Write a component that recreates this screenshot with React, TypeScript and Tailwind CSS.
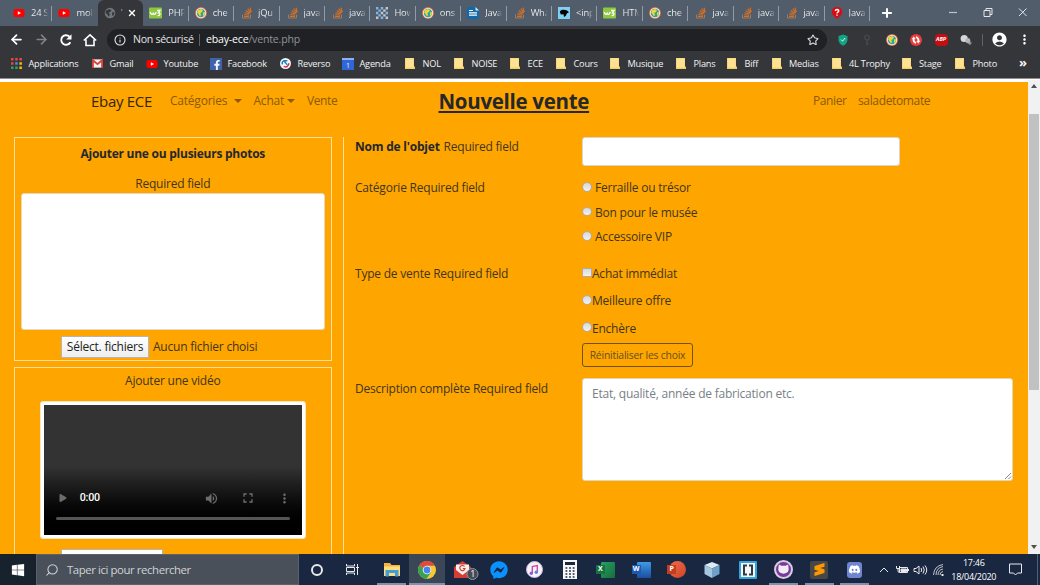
import React from "react";
import { Search, ArrowLeft, ArrowRight, Info, Star, X, Plus } from "lucide-react";
import { FaFacebookF, FaPlay, FaWindows, FaFacebookMessenger } from "react-icons/fa";
import { MdVolumeUp, MdFullscreen, MdMoreVert, MdAccountCircle } from "react-icons/md";
import { SiDiscord, SiSublimetext } from "react-icons/si";

function Youtube() {
  return (
    <svg viewBox="0 0 12 12" className="size-3 shrink-0">
      <rect x="0.500" y="2" width="11" height="8" rx="2" fill="#f00" />
      <path d="M4.800 4.200v3.600L8 6z" fill="#fff" />
    </svg>
  );
}

function Globe() {
  return (
    <svg viewBox="0 0 12 12" className="size-3 shrink-0">
      <circle cx="6" cy="6" r="6" fill="#e5644c" />
      <circle cx="6" cy="6" r="5.200" fill="#f6e9c8" />
      <circle cx="6" cy="6" r="4.200" fill="#25a5a5" />
      <path d="M3 3.200 6 2l2 1-1 2-1.600 1L6 8 5 9.600 3.800 7.500 2.200 5.500zM8 5.500l2-.5-.3 2.500L8 9z" fill="#f0d43a" />
    </svg>
  );
}

function W3() {
  return (
    <svg viewBox="0 0 13 12" className="h-3 w-[13px] shrink-0">
      <rect y="0.500" width="13" height="11" rx="1" fill="#8cc93e" />
      <path d="M1.200 5Q2.800 9.200 4.200 6.200 5.600 9.200 7.200 5M8 3.500h3L9.400 5.800c2.500 0 2 3.200-.8 2.800" fill="none" stroke="#fff" strokeWidth="1.300" />
    </svg>
  );
}

function Stack() {
  return (
    <svg viewBox="-1 0 12 12" className="size-3 shrink-0">
      <path d="M1.500 7.500V11h8V7.500" fill="none" stroke="#a07a60" strokeWidth="1" />
      <path d="M3 9.500h5M3.100 7.700l5 .5M3.600 5.700l4.800 1.300M4.800 3.600l4.200 2.600M6.700 1.700l3.100 3.900M9 .6l1.200 4.600" stroke="#d9701f" strokeWidth="1.150" fill="none" />
    </svg>
  );
}

function Checker() {
  return (
    <svg viewBox="0 0 12 12" className="size-3 shrink-0">
      <path d="M0 0h2.400v2.400H0zM4.800 0h2.400v2.400H4.800zM2.400 2.400h2.400v2.400H2.400zM9.600 4.800H12v2.400H9.600zM0 4.800h2.400v2.400H0zM4.800 9.600h2.400V12H4.800zM2.400 7.200h2.400v2.400H2.400z" fill="#7fb6e6" />
      <path d="M9.600 0H12v2.400H9.600zM7.200 2.400h2.400v2.400H7.200zM4.800 4.800h2.400v2.400H4.800zM7.200 7.200h2.400v2.400H7.200zM0 9.600h2.400V12H0zM9.600 9.600H12V12H9.600z" fill="#c4c8cc" />
    </svg>
  );
}

function Doc() {
  return (
    <svg viewBox="0 0 12 12" className="size-3 shrink-0">
      <path d="M0 0h9l3 3v9H0z" fill="#1368a8" />
      <path d="M8.500 0 12 3.500H8.500z" fill="#dceaf5" />
      <path d="M2 3.500h4M2 5.800h8M2 8.200h8" stroke="#fff" strokeWidth="1.200" />
    </svg>
  );
}

function Bird() {
  return (
    <svg viewBox="0 0 12 12" className="size-3 shrink-0">
      <rect width="12" height="12" fill="#7fd0f3" />
      <path d="M1.800 4.500C3 2 8.500 1.800 11 5.200L8.800 6.500 7.800 8.800 6 10 5.500 7.200 2.800 7.500z" fill="#000" />
    </svg>
  );
}

function Question() {
  return (
    <svg viewBox="0 0 12 12" className="size-3 shrink-0">
      <path d="M6 0a5 5 0 0 1 3.600 8.600L6 12 2.400 8.600A5 5 0 0 1 6 0z" fill="#d90b12" />
      <path d="M4.300 3.900C4.500 1.900 7.900 2 7.700 4 7.500 5 6 5.200 6 6.600M6 7.600v1.200" fill="none" stroke="#fff" strokeWidth="1.400" />
    </svg>
  );
}

function Folder() {
  return (
    <svg viewBox="0 0 10 11" className="h-[11px] w-[10px] shrink-0">
      <path d="M0 0h9v8l1 1v2H0z" fill="#f4cf62" />
      <path d="M.6.4h8v9.200h-8z" fill="#fde293" />
    </svg>
  );
}

function BareGlobe() {
  return (
    <svg viewBox="0 0 12 12" className="size-3 shrink-0">
      <circle cx="6" cy="6" r="5.300" fill="#70757a" />
      <path d="M2 3.500 5 2.200l2.500.8L6.300 5l-2 .5L6 7.300 4.600 9.800 3.300 7.200 1.500 6zM8 5.500l2.500-.5-.7 3L8.300 9z" fill="#35363a" />
    </svg>
  );
}

const tabs: [React.ReactNode, string][] = [
  [<W3 />, "PHP"],
  [<Globe />, "che"],
  [<Stack />, "jQu"],
  [<Stack />, "java"],
  [<Stack />, "java"],
  [<Checker />, "How"],
  [<Globe />, "ons"],
  [<Doc />, "Java"],
  [<Stack />, "Wha"],
  [<Bird />, "<inp"],
  [<W3 />, "HTM"],
  [<Globe />, "che"],
  [<Stack />, "java"],
  [<Stack />, "java"],
  [<Stack />, "java"],
  [<Question />, "Java"],
];

function Tab({ icon, title, line = true }: { icon: React.ReactNode; title: string; line?: boolean }) {
  return (
    <div className="flex h-[26px] w-[45.430px] shrink-0 items-center pl-[6px]">
      {icon}
      <span className="ml-[6px] w-[17px] shrink-0 bg-linear-to-r from-[#f1f3f4] from-70% to-transparent bg-clip-text text-[9.400px] tracking-[-0.2px] whitespace-nowrap text-transparent">{title}</span>
      {line && <span className="ml-auto h-[15px] w-px bg-[#929aa3]" />}
    </div>
  );
}

function TabStrip() {
  return (
    <div className="flex h-[26px] items-center bg-[#515d6a] pl-[7px]">
      <Tab icon={<Youtube />} title="24 S" />
      <Tab icon={<Youtube />} title="mol" line={false} />
      <div className="flex h-[26px] w-[45.430px] shrink-0 items-center rounded-t-[6px] bg-[#35363a] pl-[6px] text-[9px] text-white">
        <BareGlobe />
        <span className="ml-[5px] w-[6px] text-[#8ab4f8]">'</span>
        <X size={10} strokeWidth={3.200} />
      </div>
      {tabs.map(([icon, title], i) => (
        <Tab key={i} icon={icon} title={title} />
      ))}
      <Plus size={14} strokeWidth={3.500} className="ml-[10px] shrink-0 text-white" />
      <svg viewBox="0 0 82 12" className="ml-[53px] h-3 w-[82px] shrink-0" fill="none" stroke="#e4e6e8">
        <path d="M2 5.500h8" stroke="#c0c5ca" strokeWidth="1.200" />
        <path d="M37 3.500h6v6h-6zM39 3.500v-2h6v6h-2M72 1.500l7.500 7.500M79.500 1.500 72 9" />
      </svg>
    </div>
  );
}

function AddressBar() {
  return (
    <div className="flex h-[28px] items-center pb-[1px] pl-[9px] text-white">
      <ArrowLeft size={15} strokeWidth={2.800} />
      <ArrowRight size={15} strokeWidth={2.500} className="ml-[10px] text-[#808387]" />
      <svg viewBox="0 0 16 16" className="ml-[9px] size-4" fill="none" stroke="currentColor" strokeWidth="1.900">
        <path d="M12.300 10.200A4.800 4.800 0 1 1 11.500 4.700" />
        <path d="M13.500 2.200v5.300H8.200z" fill="currentColor" stroke="none" />
      </svg>
      <svg viewBox="0 0 16 16" className="ml-[8px] size-4" fill="none" stroke="currentColor" strokeWidth="1.600">
        <path d="M1.800 8.500 8 2.800l6.200 5.700M4 7.500v6h8v-6" />
      </svg>
      <div className="ml-[9px] flex h-[22px] w-[720px] items-center rounded-full bg-[#202124] pl-[7px] text-[10.600px]">
        <Info size={12} strokeWidth={2.200} className="text-[#e4e6e8]" />
        <span className="ml-[7px] w-[66px] tracking-[-0.3px] whitespace-nowrap text-[#e4e6e8]">Non sécurisé</span>
        <span className="h-3 w-px bg-[#5f6368]" />
        <span className="ml-[6px] tracking-[-0.2px] whitespace-nowrap">ebay-ece<span className="text-[#8f949a]">/vente.php</span></span>
        <Star size={12} strokeWidth={2.200} className="mr-[8px] ml-auto text-[#dadce0]" />
      </div>
      <div className="ml-[10px] flex w-[135px] shrink-0 items-center justify-between">
        <svg viewBox="0 0 12 12" className="size-3"><path d="m6 .5 4.500 1.500v4Q10 10 6 11.700 2 10 1.500 6V2z" fill="#12a483" /><path d="m4 5.500 1.500 1.700L8.200 4" stroke="#d7fff1" fill="none" /></svg>
        <svg viewBox="0 0 12 12" className="size-3"><path d="M6 11.500V6M6 9.500h1.500M6 6a2.300 2.500 0 1 1 .1 0" stroke="#4a4c50" fill="none" strokeWidth="1.200" /></svg>
        <Globe />
        <svg viewBox="0 0 12 12" className="size-3"><circle cx="6" cy="6" r="6" fill="#eb3b3b" /><path d="M6 9Q3.200 8 3.500 4.500M6 3Q8.800 4 8.500 7.500" stroke="#fff" strokeWidth="1.700" fill="none" /><path d="M1.800 5.300 3.700 2.500l2 2.600zM10.200 6.700 8.300 9.500l-2-2.600z" fill="#fff" /></svg>
        <span className="flex h-3 w-[13px] items-center justify-center rounded-[4px] bg-[#c70d0f] text-[5.500px] font-bold italic">ABP</span>
        <svg viewBox="0 0 12 12" className="size-3"><path d="m7 7 4 3" stroke="#8a8c8f" strokeWidth="3" /><circle cx="4.200" cy="4.500" r="3.600" fill="#d5d7d8" /><circle cx="7.800" cy="6.500" r="2.500" fill="#b3b5b7" /></svg>
      </div>
      <span className="ml-[10px] h-3 w-px bg-[#5f6368]" />
      <MdAccountCircle size={17} className="ml-[8px]" />
      <MdMoreVert size={15} className="ml-[9px]" />
    </div>
  );
}

function Bookmark({ icon, label, w }: { icon?: React.ReactNode; label: string; w: string }) {
  return (
    <div className={"flex shrink-0 items-center whitespace-nowrap " + w}>
      <span className="flex w-[17.500px] shrink-0">{icon ?? <Folder />}</span>
      <span>{label}</span>
    </div>
  );
}

function Bookmarks() {
  return (
    <div className="flex h-[24px] items-center pb-[4px] pl-[11px] text-[9.200px] tracking-[-0.2px] text-[#f1f3f4]">
      <Bookmark w="w-[81px]" label="Applications" icon={
        <svg viewBox="0 0 11 11" className="size-[11px]">
          <path d="M0 0h2.500v2.500H0zM0 4.200h2.500v2.500H0zM8.400 0h2.500v2.500H8.400zM4.200 0h2.500v2.500H4.200z" fill="#e8473b" />
          <path d="M4.200 4.200h2.500v2.500H4.200z" fill="#4b8bf5" />
          <path d="M0 8.400h2.500v2.500H0zM4.200 8.400h2.500v2.500H4.200z" fill="#31a354" />
          <path d="M8.400 8.400h2.500v2.500H8.400zM8.400 4.200h2.500v2.500H8.400z" fill="#f7bd16" />
        </svg>} />
      <Bookmark w="w-[54px]" label="Gmail" icon={<svg viewBox="0 0 12 12" className="size-[11px]"><path d="M0 1.500h12v9H0z" fill="#f2f2f2" /><path d="M1 11V2.500l5 4.200 5-4.200V11" fill="none" stroke="#d93f35" strokeWidth="2" /></svg>} />
      <Bookmark w="w-[64px]" label="Youtube" icon={<Youtube />} />
      <Bookmark w="w-[70px]" label="Facebook" icon={<span className="flex size-3 items-end justify-end bg-[#3f62ad]"><FaFacebookF size={10} /></span>} />
      <Bookmark w="w-[62px]" label="Reverso" icon={<svg viewBox="0 0 12 12" className="size-[11px]"><circle cx="6" cy="6" r="6" fill="#f2f5f7" /><path d="M2.800 7A3 3 0 0 1 4 3h4M4.500 3.500l3.500 4" stroke="#1581c4" strokeWidth="1.500" fill="none" /><path d="M9.500 5.500A3.500 3.500 0 0 1 4 9" stroke="#db2b3f" strokeWidth="1.500" fill="none" /></svg>} />
      <Bookmark w="w-[63px]" label="Agenda" icon={<span className="flex size-3 flex-col items-center justify-end border-t-2 border-[#8bb1f5] bg-[#2f66d8] text-[7px] leading-[9px]">1</span>} />
      <Bookmark w="w-[49px]" label="NOL" />
      <Bookmark w="w-[56px]" label="NOISE" />
      <Bookmark w="w-[46px]" label="ECE" />
      <Bookmark w="w-[54px]" label="Cours" />
      <Bookmark w="w-[66px]" label="Musique" />
      <Bookmark w="w-[51px]" label="Plans" />
      <Bookmark w="w-[44.500px]" label="Biff" />
      <Bookmark w="w-[60px]" label="Medias" />
      <Bookmark w="w-[70px]" label="4L Trophy" />
      <Bookmark w="w-[53.500px]" label="Stage" />
      <Bookmark w="w-[64px]" label="Photo" />
      <span className="mb-[3px] text-[13px] leading-none font-bold">»</span>
    </div>
  );
}

function Caret() {
  return <span className="mt-[-1px] h-0 w-0 shrink-0 border-x-[4px] border-t-[4px] border-x-transparent border-t-current" />;
}

function Choice({ label, square = false, wide = false }: { label: string; square?: boolean; wide?: boolean }) {
  return (
    <label className="flex items-center">
      <span className={"mb-[2px] size-[9.500px] border border-[#b3ab9c] bg-linear-to-b from-[#d8d8d8] to-[#f2f2f2] " + (square ? "rounded-[1px]" : "rounded-full")} />
      <span className={wide ? "ml-[3.500px]" : "ml-[0.500px]"}>{label}</span>
    </label>
  );
}

function LeftColumn() {
  return (
    <div className="ml-[14px] flex w-[317.500px] shrink-0 flex-col gap-[6px]">
      <section className="flex h-[224px] shrink-0 flex-col items-center border border-[#ffdf9f]">
        <h2 className="mt-[7px] h-[18px] leading-[18px] font-bold tracking-[-0.250px] text-[#24282c]">Ajouter une ou plusieurs photos</h2>
        <p className="mt-[12px] h-[18px] leading-[18px]">Required field</p>
        <div className="h-[137px] w-[304px] shrink-0 rounded-[3px] border border-[#e5d9bd] bg-white" />
        <div className="mt-[6px] ml-[46px] flex items-center self-start">
          <button className="h-[22px] w-[88px] border border-[#b9b5aa] bg-linear-to-b from-white to-[#eeeeee] whitespace-nowrap text-[#222]">Sélect. fichiers</button>
          <span className="ml-[4px]">Aucun fichier choisi</span>
        </div>
      </section>
      <section className="flex h-[200px] shrink-0 flex-col items-center border border-[#ffdf9f]">
        <p className="mt-[4px] h-[18px] shrink-0 leading-[18px]">Ajouter une vidéo</p>
        <div className="mt-[11px] h-[138px] w-[266px] shrink-0 rounded-[3px] border border-[#f5e6c4] bg-white p-[3px]">
          <div className="flex h-full flex-col justify-end bg-linear-to-b from-[#333333] from-47% to-black">
            <div className="flex items-center text-[#6d6d6d]">
              <FaPlay size={8} className="ml-[15px]" />
              <span className="ml-[13px] w-[121px] font-[Roboto,sans-serif] text-[10.700px] font-medium text-white">0:00</span>
              <MdVolumeUp size={15} className="ml-[3px]" />
              <MdFullscreen size={16} className="ml-[21px]" />
              <MdMoreVert size={15} className="ml-[21px]" />
            </div>
            <div className="mx-[12px] mt-[10.500px] mb-[15px] h-[3px] rounded-full bg-[#545454]" />
          </div>
        </div>
        <div className="mt-[9.500px] ml-[46px] h-[22px] w-[102px] shrink-0 self-start border border-[#b9b5aa] bg-white" />
      </section>
    </div>
  );
}

function SaleForm() {
  return (
    <div className="ml-[11.500px] grid flex-1 grid-cols-[227px_1fr] content-start border-l border-[#ffdf9f] pl-[11px]">
      <div className="h-[40px] leading-[20px]"><b className="mr-[1px] text-[#24282c]">Nom de l'objet</b> Required field</div>
      <div><div className="h-[29px] w-[318px] rounded-[3px] border border-[#dcd6c6] bg-white" /></div>
      <div className="h-[86px] leading-[22px]">Catégorie Required field</div>
      <div className="flex flex-col gap-[2.500px] leading-[22px]">
        <Choice wide label="Ferraille ou trésor" />
        <Choice wide label="Bon pour le musée" />
        <Choice wide label="Accessoire VIP" />
      </div>
      <div className="h-[115px] leading-[21px]">Type de vente Required field</div>
      <div className="flex flex-col items-start gap-[6.300px] leading-[21px]">
        <Choice square label="Achat immédiat" />
        <Choice label="Meilleure offre" />
        <Choice label="Enchère" />
        <button className="-mt-[2px] h-[24px] w-[111px] rounded-[3px] border border-[#6d521b] text-[10.400px] leading-[20px] whitespace-nowrap text-[#65501f]">Réinitialiser les choix</button>
      </div>
      <div className="leading-[21px]">Description complète Required field</div>
      <div className="flex h-[103px] w-[431px] items-start justify-between rounded-[3px] border border-[#e3d6b6] bg-white pl-[9px] leading-[18px] text-[#777f87]">
        <span className="mt-[6px]">Etat, qualité, année de fabrication etc.</span>
        <svg viewBox="0 0 8 8" className="size-2 self-end" stroke="#777" strokeWidth="0.900"><path d="M1 7 7 1M4.500 7 7 4.500" /></svg>
      </div>
    </div>
  );
}

function Page() {
  return (
    <div className="flex h-[476px] border-t border-[#8d8d92] bg-white pt-px text-[#40361c]">
      <main className="mt-[2px] flex w-[1028px] flex-col overflow-hidden bg-[#ffa500] text-[12px] tracking-[-0.220px]">
        <nav className="flex h-[55px] shrink-0 items-center pb-[17px] whitespace-nowrap text-[#8a5a05]">
          <span className="ml-[91px] w-[79px] text-[15px] tracking-[-0.300px] text-[#33260c]">Ebay ECE</span>
          <span className="w-[63.500px]">Catégories</span><Caret />
          <span className="ml-[12px] w-[33.500px]">Achat</span><Caret />
          <span className="ml-[12px] w-[131.500px] tracking-[-0.400px]">Vente</span>
          <h1 className="mt-px w-[374.500px] text-[20.500px] font-bold tracking-[-0.300px] text-[#24282c] underline decoration-2 underline-offset-2">Nouvelle vente</h1>
          <span className="w-[45px] tracking-[-0.400px]">Panier</span>
          <span className="tracking-[-0.350px]">saladetomate</span>
        </nav>
        <div className="flex h-[430px]">
          <LeftColumn />
          <SaleForm />
        </div>
      </main>
      <div className="flex flex-1 flex-col items-center bg-[#f1f1f1]">
        <span className="mt-[4px] h-0 w-0 border-x-[3px] border-b-[4px] border-x-transparent border-b-[#505050]" />
        <span className="mt-[26px] h-[276px] w-[10px] bg-[#c1c1c1]" />
        <span className="mt-auto mb-[5px] h-0 w-0 border-x-[3px] border-t-[4px] border-x-transparent border-t-[#505050]" />
      </div>
    </div>
  );
}

function TaskItem({ children, open = false, active = false }: { children: React.ReactNode; open?: boolean; active?: boolean }) {
  return (
    <div className={"relative flex h-[31px] w-[35.650px] shrink-0 items-center justify-center " + (active ? "bg-[#3b4756]" : "")}>
      {children}
      {(open || active) && <span className={"absolute bottom-0 h-[2px] bg-[#7d93ad] " + (active ? "w-full" : "w-[29px]")} />}
    </div>
  );
}

function Office({ letter, dark, light, round = false }: { letter: string; dark: string; light: string; round?: boolean }) {
  return (
    <span className="relative flex h-[17px] w-[19px] items-center">
      <span className={"absolute right-0 " + light + (round ? " size-[17px] rounded-full" : " h-4 w-[14px] rounded-[1px]")} />
      <span className={"relative flex size-[9px] items-center justify-center text-[7px] font-bold text-white " + dark}>{letter}</span>
    </span>
  );
}

function Taskbar() {
  return (
    <footer className="flex h-[31px] items-center bg-[#1a2740] text-white">
      <div className="flex h-full w-[36px] shrink-0 items-center justify-center bg-[#18222d]"><FaWindows size={14} /></div>
      <div className="flex h-full w-[263px] shrink-0 items-center border border-[#59616a] bg-[#495059] pl-[8px] text-[11.400px] tracking-[-0.420px] text-[#d0d3d6]">
        <Search size={14} strokeWidth={1.800} className="-scale-x-100" />
        <span className="ml-[8px]">Taper ici pour rechercher</span>
      </div>
      <TaskItem><span className="size-[12px] rounded-full border-2 border-[#e8e9ec]" /></TaskItem>
      <TaskItem>
        <svg viewBox="0 0 13 13" className="size-[13px]" fill="none" stroke="#e8e9ec"><path d="M.5 1v2h8V1M.5 4.500h8v4h-8zM.5 12v-2h8v2M11.500 1v11M10 4.500h3" /></svg>
      </TaskItem>
      <span className="w-[3.500px] shrink-0" />
      <TaskItem open>
        <svg viewBox="0 0 18 16" className="h-4 w-[18px]"><path d="M1 1h6l1.500 2H17v11H1z" fill="#f3b63f" /><path d="M1 4.500h16V14H1z" fill="#ffdc7c" /><path d="M2.500 8h13v6.500H12V11H6v3.500H2.500z" fill="#3f9edb" /></svg>
      </TaskItem>
      <TaskItem active>
        <svg viewBox="0 0 18 18" className="size-[18px]"><circle cx="9" cy="9" r="9" fill="#f9c934" /><path d="M9 9 1.200 4.500A9 9 0 0 1 16.800 4.700H9z" fill="#de4b3c" /><path d="M9 9 1.200 4.500A9 9 0 0 0 8.400 18L13 11.300z" fill="#38a156" /><circle cx="9" cy="9" r="4.300" fill="#f6f6f6" /><circle cx="9" cy="9" r="3.400" fill="#4585ed" /></svg>
      </TaskItem>
      <TaskItem>
        <svg viewBox="0 0 26 20" className="ml-[7px] h-5 w-[26px] shrink-0"><path d="M1 7 9.500 1 18 7v11H1z" fill="#d53d32" /><path d="M3 4.500h13v5.500l-6.500 5L3 10z" fill="#f4f0ee" /><path d="M11.500 6.500a2.600 2.600 0 1 0 .5 2H9.800" fill="none" stroke="#d53d32" strokeWidth="1.200" /><circle cx="19.500" cy="14" r="5.500" fill="#454b55" stroke="#8d949d" /><text x="17.200" y="17.200" fontSize="9" fill="#fff">1</text></svg>
      </TaskItem>
      <TaskItem><FaFacebookMessenger size={18} className="text-[#0a91ff]" /></TaskItem>
      <TaskItem><span className="flex size-[17px] items-center justify-center rounded-full border border-[#d0b9dc] bg-[#f6f4f8]"><svg viewBox="0 0 12 12" className="size-3"><path d="M4.300 9V2.500l5-1V8" fill="none" stroke="#d64a9c" strokeWidth="1.400" /><circle cx="3.300" cy="9.200" r="1.700" fill="#8b5be0" /><circle cx="8.300" cy="8.200" r="1.700" fill="#5b83e8" /></svg></span></TaskItem>
      <TaskItem>
        <svg viewBox="0 0 14 19" className="h-[19px] w-[14px]"><path d="M0 0h14v19H0z" fill="#f7f7f7" /><path d="M2 2h10v3H2z" fill="#1a2740" /><path d="M2.500 8h10M2.500 11h10M2.500 14h10M2.500 17h10" stroke="#1a2740" strokeWidth="1.500" strokeDasharray="1.800 1.800" /></svg>
      </TaskItem>
      <TaskItem><Office letter="X" dark="bg-[#17723f]" light="bg-linear-to-br from-[#25a366] to-[#186c3c]" /></TaskItem>
      <TaskItem><Office letter="W" dark="bg-[#1b58b5]" light="bg-linear-to-b from-[#3f9be8] to-[#1e4d9f]" /></TaskItem>
      <TaskItem><Office round letter="P" dark="bg-[#c33e1f]" light="bg-linear-to-br from-[#ef6b49] to-[#cf4525]" /></TaskItem>
      <TaskItem>
        <svg viewBox="0 0 16 18" className="h-[18px] w-4"><path d="M8 1 15.500 4 8 7.500.5 4z" fill="#dcecf5" /><path d="M.5 4 8 7.500V17L.5 13z" fill="#a5c6df" /><path d="M15.500 4 8 7.500V17l7.500-4z" fill="#6fa0c8" /></svg>
      </TaskItem>
      <TaskItem>
        <svg viewBox="0 0 18 18" className="size-[18px]"><rect width="18" height="18" rx="1" fill="#31a5df" /><rect x="2" y="2" width="14" height="14" fill="#f4f6f7" /><path d="M8 4.500H5v9h3M10 4.500h3v9h-3" fill="none" stroke="#303a42" strokeWidth="2" /></svg>
      </TaskItem>
      <TaskItem open><span className="flex size-[19px] items-center justify-center rounded-full border-2 border-[#d9cbe3] bg-[#7a3a9c]"><svg viewBox="0 0 14 14" className="size-[13px]"><path d="M2 1.500 4.800 3h4.400L12 1.500l.5 4Q13.500 11 7 11.500.5 11 1.500 5.500z" fill="#f2ecf6" /></svg></span></TaskItem>
      <TaskItem open><span className="flex size-[18px] items-center justify-center rounded-[2px] bg-[#474747]"><SiSublimetext size={13} className="text-[#ff9800]" /></span></TaskItem>
      <TaskItem open><span className="flex h-4 w-[15px] items-center justify-center rounded-[3px] bg-[#7085d0]"><SiDiscord size={11} /></span></TaskItem>
      <svg viewBox="0 0 66 16" className="ml-[6px] h-4 w-[66px] shrink-0" fill="none" stroke="#e8e9ec">
        <path d="m1 10 4-4 4 4" />
        <path d="M20.500 5.500h8v5h-8zM29.500 7v2" /><path d="M22 7h5.500v2.500H22z" fill="#e8e9ec" /><path d="M17.500 4v2.500h3V4M19 6.500V9q0 1.500 1.500 1.500" />
        <path d="M35 6.500h2l3-2.500v8L37 9.500h-2zM42 6q1.500 2 0 4M44 4.500q2.500 3.500 0 7M46 3.500q3.500 4.500 0 9" />
        <path d="M57 13Q57 6 64 4.500M59 13q0-5 5-6M61 13q0-3 3-3.500M54.500 13Q55 4 64 2.500" strokeWidth=".8" /><path d="M62.500 12h2v2h-2z" fill="#e8e9ec" stroke="none" />
      </svg>
      <div className="ml-[6px] w-[46px] shrink-0 text-center text-[9px] leading-[14px] tracking-[-0.280px] whitespace-nowrap">17:46<br />18/04/2020</div>
      <svg viewBox="0 0 13 13" className="ml-[12px] size-[13px] shrink-0" fill="none" stroke="#e8e9ec"><path d="M.5 1h12v9H8.500L6.500 12l-2-2h-4z" /></svg>
      <span className="mr-[2px] ml-auto h-full w-px bg-[#566074]" />
    </footer>
  );
}

export default function App() {
  return (
    <div className="flex h-[585px] w-[1040px] flex-col overflow-hidden bg-[#35363a] font-['Open_Sans','Noto_Sans',sans-serif]">
      <TabStrip />
      <AddressBar />
      <Bookmarks />
      <Page />
      <Taskbar />
    </div>
  );
}
